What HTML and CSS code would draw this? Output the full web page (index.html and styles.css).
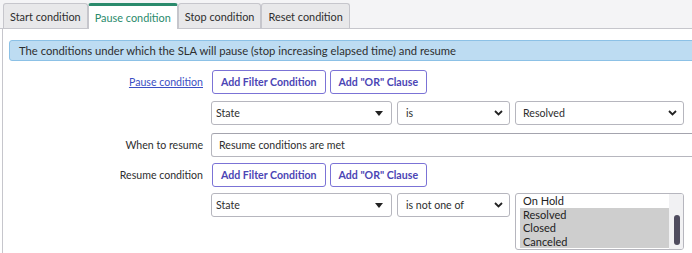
FILE: index.html
```html
<!DOCTYPE html>
<html lang="en">
<head>
    <meta charset="UTF-8">
    <title>SLA Conditions</title>
    <link rel="stylesheet" href="styles.css">
</head>
<body>

<div class="tabs">
    <div class="tab">Start condition</div>
    <div class="tab active">Pause condition</div>
    <div class="tab">Stop condition</div>
    <div class="tab">Reset condition</div>
</div>

<div class="panel">
    <div class="info">The conditions under which the SLA will pause (stop increasing elapsed time) and resume</div>

    <div class="form-grid">
        <!-- Pause condition -->
        <div class="label"><a href="#" class="cond-link">Pause condition</a></div>
        <div class="buttons">
            <button class="btn">Add Filter Condition</button>
            <button class="btn">Add "OR" Clause</button>
        </div>

        <div></div>
        <div class="filter-row gap-top">
            <div class="select field">
                <span>State</span>
                <svg width="8" height="5" viewBox="0 0 8 5"><path d="M0 0h8L4 5z" fill="#222"/></svg>
            </div>
            <div class="select operator">
                <span>is</span>
                <svg width="9" height="6" viewBox="0 0 9 6"><path d="M1 1l3.5 3.5L8 1" fill="none" stroke="#222" stroke-width="1.8"/></svg>
            </div>
            <div class="select value">
                <span>Resolved</span>
                <svg width="9" height="6" viewBox="0 0 9 6"><path d="M1 1l3.5 3.5L8 1" fill="none" stroke="#222" stroke-width="1.8"/></svg>
            </div>
        </div>

        <!-- When to resume -->
        <div class="label resume-top">When to resume</div>
        <div class="text-input resume-top">Resume conditions are met</div>

        <!-- Resume condition -->
        <div class="label button-top">Resume condition</div>
        <div class="buttons button-top">
            <button class="btn">Add Filter Condition</button>
            <button class="btn">Add "OR" Clause</button>
        </div>

        <div></div>
        <div class="filter-row second">
            <div class="select field">
                <span>State</span>
                <svg width="8" height="5" viewBox="0 0 8 5"><path d="M0 0h8L4 5z" fill="#222"/></svg>
            </div>
            <div class="select operator">
                <span>is not one of</span>
                <svg width="9" height="6" viewBox="0 0 9 6"><path d="M1 1l3.5 3.5L8 1" fill="none" stroke="#222" stroke-width="1.8"/></svg>
            </div>
            <div class="listbox value">
                <div class="options">
                    <div class="option">On Hold</div>
                    <div class="option selected">Resolved</div>
                    <div class="option selected">Closed</div>
                    <div class="option selected">Canceled</div>
                </div>
                <div class="scrollbar"><div class="thumb"></div></div>
            </div>
        </div>
    </div>
</div>

</body>
</html>
```

FILE: styles.css
```css
body, html {
    margin: 0;
    padding: 0;
    overflow: hidden;
    background: #fff;
    font-family: Lato, "Liberation Sans", sans-serif;
    font-size: 10.6px;
    color: #2e2e2e;
}
.tabs {
    display: flex;
    height: 29px;
    padding-left: 3px;
    box-sizing: border-box;
    padding-top: 3px;
    background: #f4f4f6;
    border-bottom: 1px solid #c6c6cc;
    font-size: 10.9px;
}
.tab {
    display: flex;
    align-items: center;
    padding: 0 6px;
    background: #e8e8ea;
    border: 1px solid #c6c6cc;
    border-bottom: none;
    border-radius: 3px 3px 0 0;
    color: #2e2e2e;
}
.tab.active {
    background: #fff;
    color: #2a8a6c;
    border-top: 3px solid #2a8a6c;
    margin-bottom: -1px;
}
.panel {
    width: 720px;
    margin-left: 2px;
    border-left: 1px solid #c6c6cc;
    padding: 11px 0 20px 6px;
}
.info {
    height: 21px;
    line-height: 19px;
    box-sizing: border-box;
    padding-left: 9px;
    font-size: 11.25px;
    background: #bddcf2;
    border: 1px solid #8cc1e6;
    border-radius: 3px;
    margin-bottom: 9px;
}
.form-grid {
    display: grid;
    grid-template-columns: 194px 1fr;
    column-gap: 8px;
    align-items: center;
}
.label {
    text-align: right;
}
.cond-link {
    color: #3b4fc4;
}
.gap-top {
    margin-top: 7px;
}
.resume-top {
    margin-top: 8px;
}
.button-top {
    margin-top: 6px;
}
.second {
    margin-top: 6px;
}
.buttons {
    display: flex;
    gap: 4px;
    padding-left: 1px;
}
.btn {
    height: 24px;
    padding: 0 8px;
    font-family: inherit;
    font-size: 10.6px;
    font-weight: bold;
    color: #4b45b5;
    background: #fff;
    border: 1px solid #7b73d6;
    border-radius: 3px;
}
.filter-row {
    display: flex;
    gap: 5px;
    align-items: flex-start;
}
.select {
    display: flex;
    align-items: center;
    justify-content: space-between;
    height: 24px;
    box-sizing: border-box;
    background: #fff;
    border: 1px solid #b6b6be;
    border-radius: 3px;
}
.field {
    width: 181px;
    padding: 0 8px 0 4px;
}
.operator {
    width: 113px;
    padding: 0 6px 0 8px;
}
.value {
    width: 169px;
}
.select.value {
    padding: 0 6px 0 7px;
}
.text-input {
    height: 24px;
    line-height: 22px;
    box-sizing: border-box;
    padding-left: 7px;
    border: 1px solid #b6b6be;
    border-top-color: #a4a4ae;
    border-radius: 3px;
    width: 520px;
}
.listbox {
    display: flex;
    height: 57px;
    box-sizing: border-box;
    border: 1px solid #b6b6be;
    border-radius: 3px;
    overflow: hidden;
}
.options {
    flex: 1;
    padding: 0 0 0 4px;
}
.option {
    height: 13.6px;
    line-height: 13.6px;
    padding-left: 3px;
    font-size: 11px;
    color: #222;
}
.option.selected {
    background: #cecece;
}
.scrollbar {
    width: 14px;
    background: #f1f1f3;
    display: flex;
    justify-content: center;
}
.thumb {
    width: 6px;
    height: 30px;
    margin-top: 21px;
    margin-left: 2px;
    border-radius: 3px;
    background: #4f4c5e;
}
```
